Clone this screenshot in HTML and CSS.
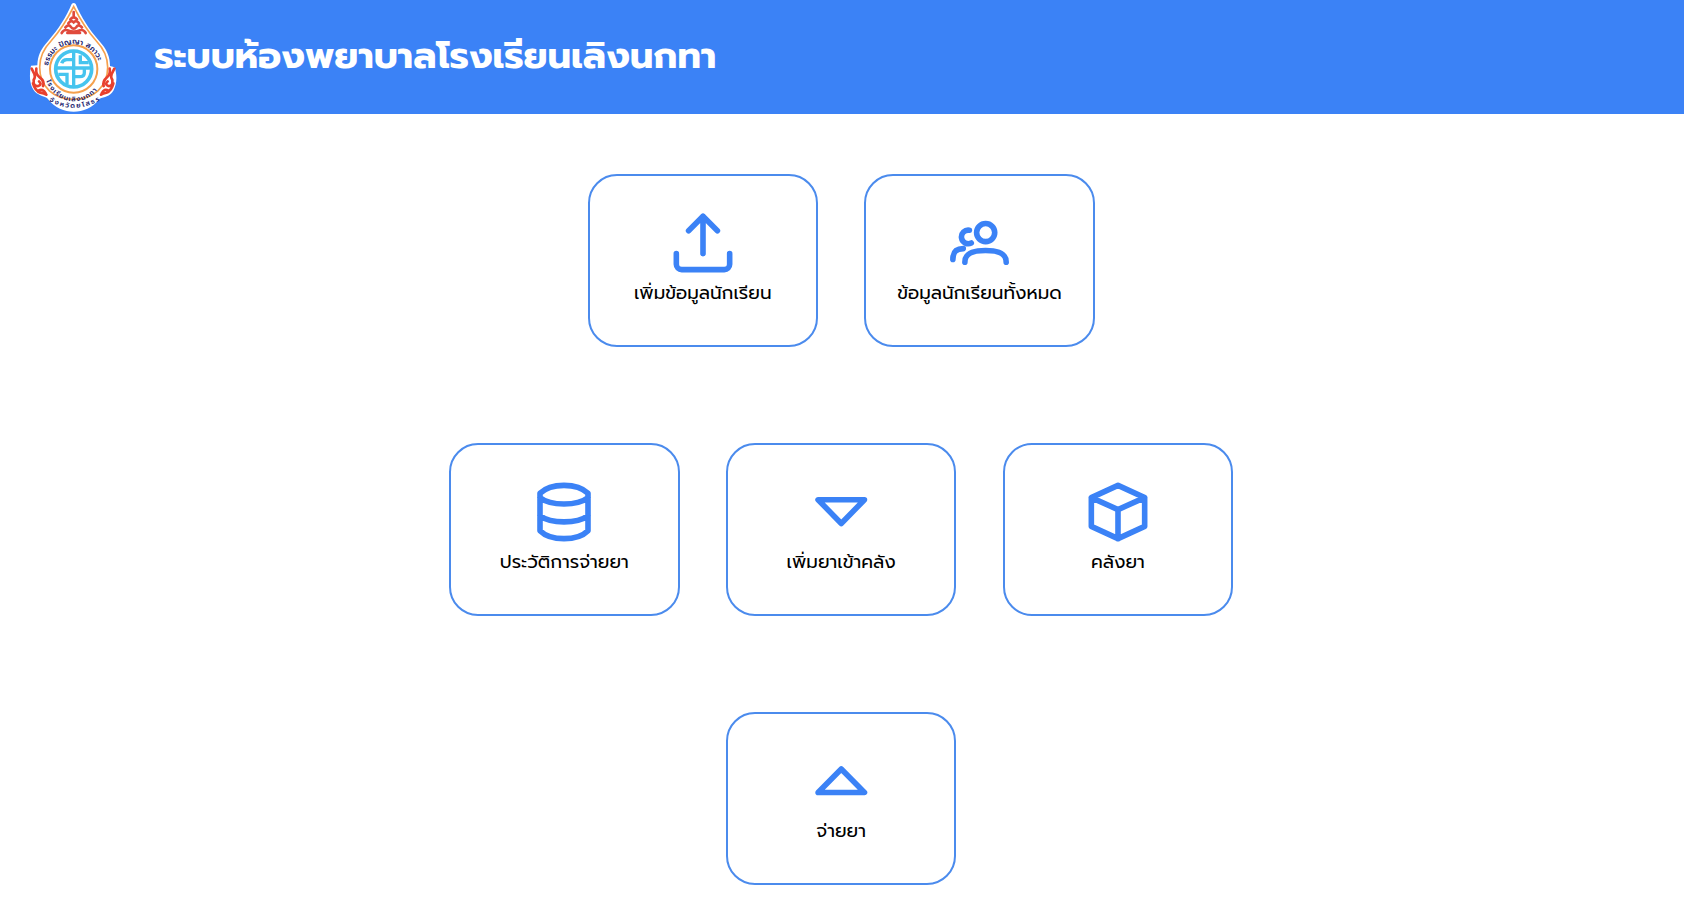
FILE: index.html
```
<!DOCTYPE html>
<html lang="th">
<head>
<meta charset="utf-8">
<title>ระบบห้องพยาบาลโรงเรียนเลิงนกทา</title>
<link rel="stylesheet" href="styles.css">
</head>
<body>
<header class="header">
  <svg class="logo" viewBox="28 6 266 338" aria-hidden="true">
    <defs>
      <path id="arc-top" d="M85 197A78 78 0 0 1 239 197"/>
      <path id="arc-mid" d="M80 242A87 87 0 0 0 248 237"/>
      <path id="arc-low" d="M88 303Q162 346 244 299"/>
    </defs>
    <path class="plate" d="M156 12Q162 6 168 12C184 50 208 88 238 122C262 148 271 170 271 198L285 202C292 224 293 250 281 272C270 290 254 290 240 296C218 324 190 335 162 335C134 335 106 324 84 296C80 291 66 290 51 280C31 263 27 232 34 197L53 196C54 168 62 148 86 122C116 88 140 50 156 12Z"/>
    <path class="drop" d="M162 20C142 60 120 94 94 123C70 148 60 170 60 202C60 262 104 298 162 298C220 298 264 262 264 202C264 170 254 148 230 123C204 94 182 60 162 20Z"/>
    <g class="tip">
      <path d="M162 36V50M152 58Q162 46 172 58M146 70Q154 58 162 67Q170 58 178 70M137 82Q147 71 154 81Q162 91 170 81Q177 71 187 82M126 99Q133 87 143 91T162 95T181 91T198 99M143 99H181"/>
    </g>
    <g class="curl">
      <path d="M36 206Q40 214 44 222T42 240Q40 260 56 258Q68 254 58 244M50 206Q47 222 60 232Q76 244 70 258M40 250Q46 272 62 278Q74 280 80 284M56 272Q70 264 78 280"/>
      <path d="M284 206Q280 214 276 222T278 240Q280 260 266 258Q254 254 264 244M270 206Q273 222 262 232Q248 244 252 258M281 250Q276 272 260 278Q250 280 244 284M266 272Q254 264 246 280"/>
    </g>
    <circle class="ring" cx="162" cy="207" r="71"/>
    <circle class="disc" cx="162" cy="207" r="54"/>
    <path class="emblem" d="M162 155V262M108 204H216M126 190Q130 177 145 179H162M182 166V188H207M116 223H142V253M162 230H180Q194 230 194 218V204"/>
    <text class="seal"><textPath href="#arc-top" textLength="205">ธรรมะ ปัญญา สภาวะ</textPath></text>
    <text class="seal small"><textPath href="#arc-mid" textLength="190">โรงเรียนเลิงนกทา</textPath></text>
    <text class="seal small"><textPath href="#arc-low" textLength="160">จังหวัดยโสธร</textPath></text>
  </svg>
  <h1 class="title">ระบบห้องพยาบาลโรงเรียนเลิงนกทา</h1>
</header>
<main class="menu">
  <div class="row">
    <a class="card">
      <svg class="icon" viewBox="0 0 24 24"><path d="M12 16V2M6.6 7.4L12 2l5.4 5.4M2 16v4a2 2 0 0 0 2 2h16a2 2 0 0 0 2-2v-4"/></svg>
      <span class="label">เพิ่มข้อมูลนักเรียน</span>
    </a>
    <a class="card">
      <svg class="icon" viewBox="0 0 24 24"><circle cx="14.5" cy="8.1" r="3.4"/><path d="M6.7 19.2c0-3 2.2-4.4 7.75-4.4s7.75 1.4 7.75 4.4M8.4 7.2A2.55 2.55 0 1 0 9.1 12M2.2 18.2C2.2 15.5 3.3 14.1 6.1 14.1"/></svg>
      <span class="label">ข้อมูลนักเรียนทั้งหมด</span>
    </a>
  </div>
  <div class="row">
    <a class="card">
      <svg class="icon" viewBox="0 0 24 24"><path d="M3 5c2-2 5.3-3 9-3s7 1 9 3v14c-2 2-5.3 3-9 3s-7-1-9-3zM3 6.6c2 1.6 5.3 2.4 9 2.4s7-.8 9-2.4M3 13.4c2 1.5 5.3 2.3 9 2.3s7-.8 9-2.3"/></svg>
      <span class="label">ประวัติการจ่ายยา</span>
    </a>
    <a class="card">
      <svg class="icon" viewBox="0 0 24 24"><path d="M3.4 7.4h17.4L12.1 16.3z"/></svg>
      <span class="label">เพิ่มยาเข้าคลัง</span>
    </a>
    <a class="card">
      <svg class="icon" viewBox="0 0 24 24"><path d="M12 2l10 4.6v10.8L12 22 2 17.4V6.6zM2 6.6l10 4.5 10-4.5M12 11.1V22"/></svg>
      <span class="label">คลังยา</span>
    </a>
  </div>
  <div class="row">
    <a class="card">
      <svg class="icon" viewBox="0 0 24 24"><path d="M12.1 7.5l8.7 8.8H3.4z"/></svg>
      <span class="label">จ่ายยา</span>
    </a>
  </div>
</main>
</body>
</html>
```
FILE: styles.css
```
* { box-sizing: border-box; }
body {
  margin: 0;
  background: #fff;
  color: #000;
  font-family: Prompt, Kanit, "Noto Sans Thai", "Noto Sans", sans-serif;
}
.header {
  display: flex;
  align-items: flex-start;
  height: 114.4px;
  padding: 2px 0 0 29.3px;
  background: #3b82f6;
  color: #fff;
}
.logo { width: 88.7px; height: 112.7px; flex: none; }
.plate { fill: #fff; }
.drop { fill: #fff; stroke: #f5a04c; stroke-width: 5; }
.tip { fill: none; stroke: #e04a3c; stroke-width: 8; stroke-linecap: round; }
.curl { fill: none; stroke: #e8402e; stroke-width: 8; stroke-linecap: round; }
.ring { fill: #fff; stroke: #f5a04c; stroke-width: 6; }
.disc { fill: #fff; stroke: #46c4ee; stroke-width: 11; }
.emblem { fill: none; stroke: #46c4ee; stroke-width: 10; }
.seal { fill: #26266f; font-size: 22px; font-weight: 600; }
.seal.small { font-size: 20px; }
.title {
  margin: 27px 0 0 36.3px;
  font-size: 36.85px;
  line-height: 54px;
  font-weight: 700;
  white-space: nowrap;
}
.menu {
  display: flex;
  flex-direction: column;
  gap: 96.2px;
  padding: 59.6px 1.8px 0 0;
}
.row { display: flex; justify-content: center; gap: 46.4px; }
.card {
  display: flex;
  flex-direction: column;
  align-items: center;
  width: 230.4px;
  height: 172.8px;
  padding-top: 35px;
  border: 2px solid #4b8bed;
  border-radius: 29px;
}
.icon {
  width: 64px;
  height: 64px;
  flex: none;
  fill: none;
  stroke: #3b82f6;
  stroke-width: 2.1;
  stroke-linecap: round;
  stroke-linejoin: round;
}
.label { font-size: 18.45px; line-height: 29px; margin-top: 3.7px; white-space: nowrap; }
```
